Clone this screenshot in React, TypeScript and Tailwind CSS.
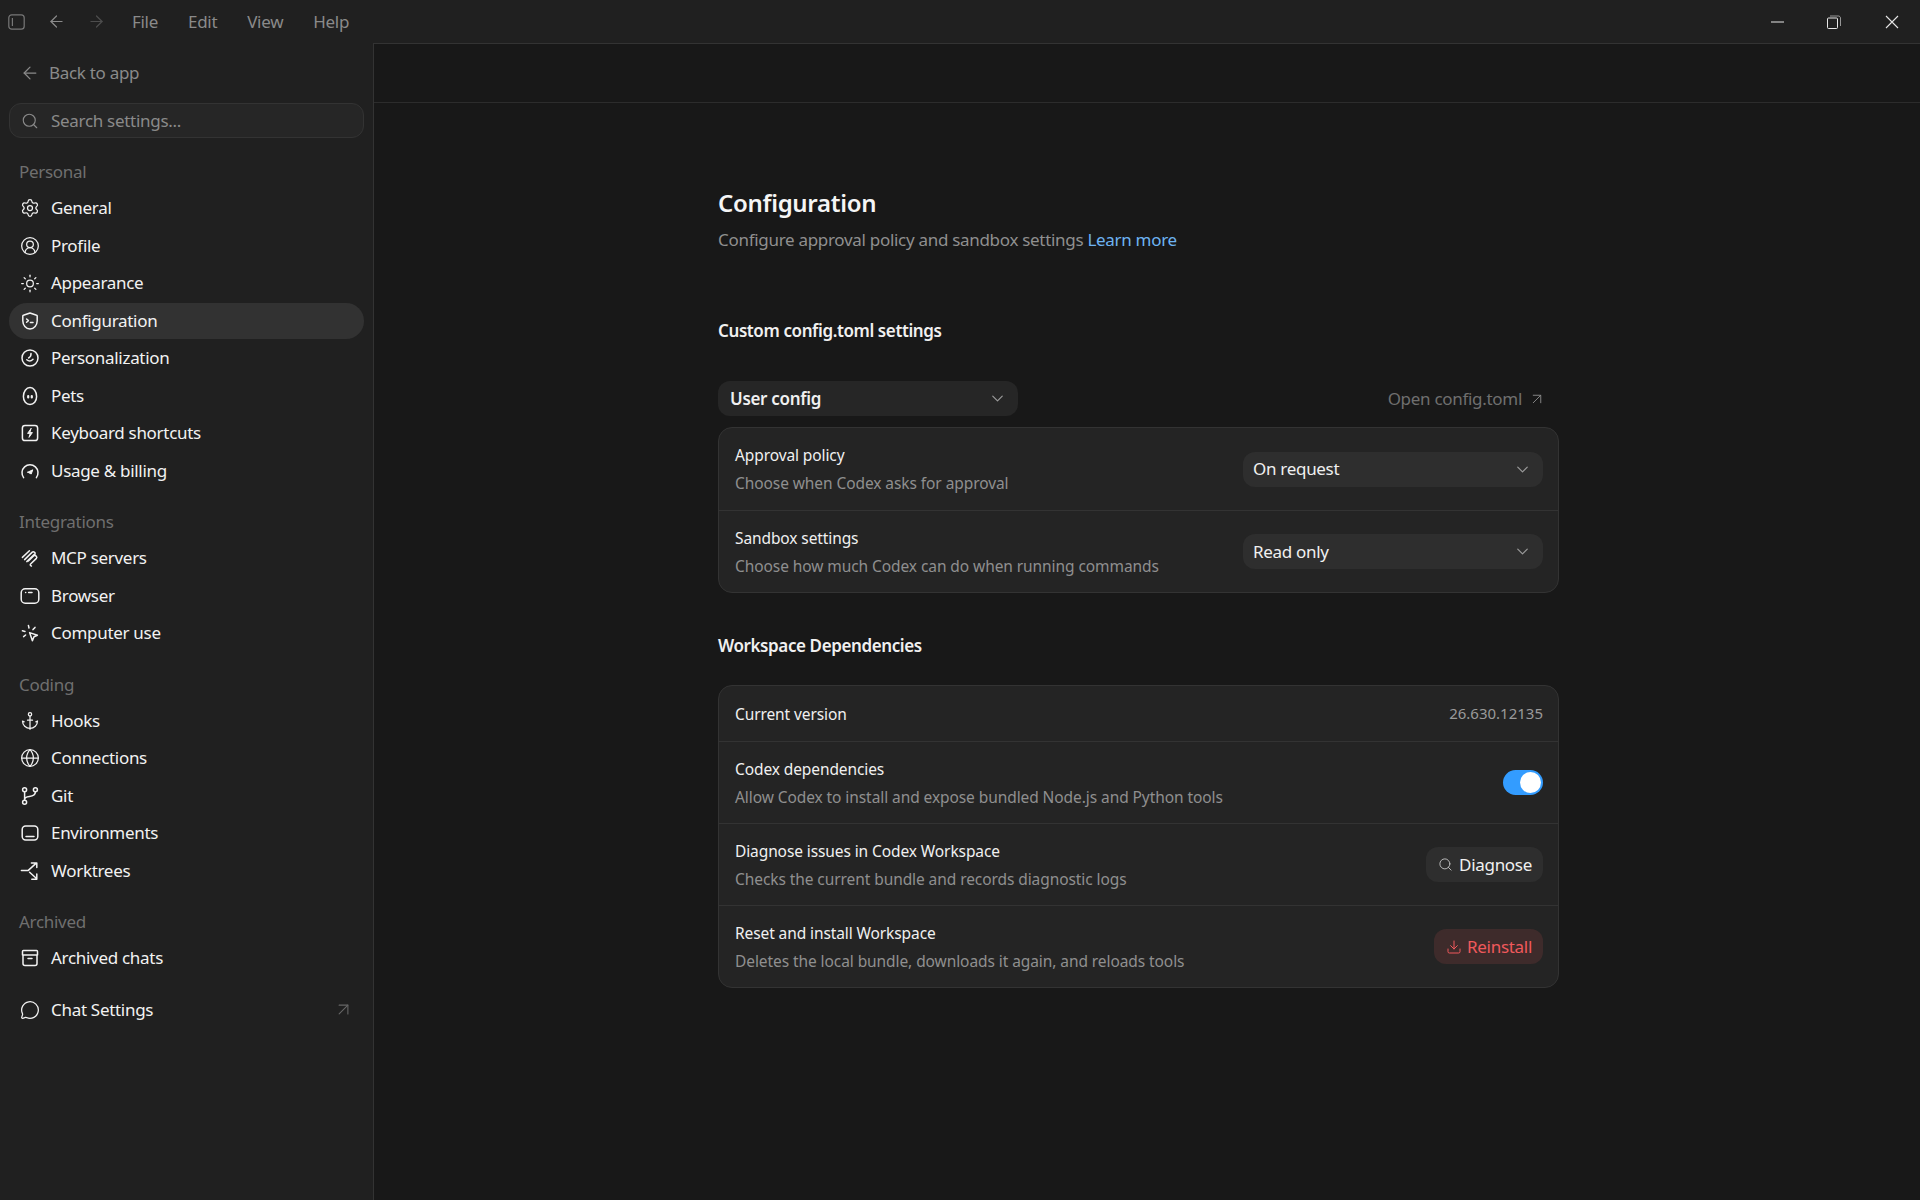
import { ReactNode } from 'react';
import { ArrowLeft, ArrowRight, ArrowUpRight, Search, ChevronDown, Download, Sun, Anchor, Globe, MessageCircle, CircleUserRound, Settings } from 'lucide-react';

const stroke = { fill: 'none', stroke: 'currentColor', strokeWidth: 1.5, strokeLinecap: 'round', strokeLinejoin: 'round' } as const;

function Ico({ children }: { children: ReactNode }) {
  return <svg width="20" height="20" viewBox="0 0 20 20" {...stroke} className="shrink-0">{children}</svg>;
}

const ShieldIcon = () => (
  <Ico>
    <path d="M10 2 16.6 4.2c.4.1.6.4.6.8v4.8c0 4.4-3.1 7.8-7.2 8.2-4.1-.4-7.2-3.8-7.2-8.2V5c0-.4.2-.7.6-.8L10 2Z" />
    <path d="m6.6 8 1.8 1.6-1.8 1.6M10.4 11.4h2.6" />
  </Ico>
);
const FaceIcon = () => (
  <Ico>
    <circle cx="10" cy="10" r="8" />
    <path d="M11 5.4c.2 2-.6 3.6-2.4 4.6M6.8 11.8c1.8 1.6 4.4 1.4 6.2-.6" />
  </Ico>
);
const EggIcon = () => (
  <Ico>
    <path d="M10 1.6c3.8 0 6.6 4 6.6 8.8 0 4.8-2.8 8-6.6 8s-6.6-3.2-6.6-8c0-4.8 2.8-8.8 6.6-8.8Z" />
    <path d="M8.2 10v1.4M11.8 10v1.4" strokeWidth="2.2" />
  </Ico>
);
const ShortcutIcon = () => (
  <Ico>
    <rect x="2.4" y="2.4" width="15.2" height="15.2" rx="2.6" />
    <path d="m11 5.6-3.4 4.8h2.6L9 14.4l3.4-4.8H9.8L11 5.6Z" fill="currentColor" strokeWidth="1" />
  </Ico>
);
const GaugeIcon = () => (
  <Ico>
    <path d="M3.6 16.6A8 8 0 1 1 16.4 16.6" />
    <path d="m7.8 11.2 5-2.4-1.6 4.2-3.4-1.8Z" fill="currentColor" strokeWidth="1" />
  </Ico>
);
const McpIcon = () => (
  <Ico>
    <path d="m2.4 9.4 7-6.6M4.6 11.6 12 4.4c1.2-1.2 3-.2 3.2.8.2.8-.2 1.4-.8 2L8.4 13M6.8 13.6l7.6-7.2M14 7.6c1.8-.6 3.6 1.2 2.4 2.8L10.6 16c-.8.8-.2 1.8.8 2" />
  </Ico>
);
const BrowserIcon = () => (
  <Ico>
    <rect x="1.2" y="2.8" width="17.6" height="14.4" rx="4" />
    <path d="M5.6 6.6h.1M8.6 6.6h3.4" />
  </Ico>
);
const CursorIcon = () => (
  <Ico>
    <path d="m9.6 9.6 7.8 2.6-3.4 1.6-1.6 4-2.8-8.2Z" />
    <path d="M8.4 2.4l.6 2.6M15 4.4l-2 2.2M2.4 7.8l2.6.6M3.6 13.6l2-1.6" />
  </Ico>
);
const BranchIcon = () => (
  <Ico>
    <circle cx="4.6" cy="3.8" r="2" />
    <circle cx="4.6" cy="16.2" r="2" />
    <circle cx="15.4" cy="3.8" r="2" />
    <path d="M4.6 5.8v8.4M15.4 5.8c0 3.6-3 4.4-6 4.6-2.6.2-4.8.6-4.8 3" />
  </Ico>
);
const EnvIcon = () => (
  <Ico>
    <rect x="2.2" y="3" width="15.6" height="14" rx="3.4" />
    <path d="M6 13.6h8" />
  </Ico>
);
const WorktreeIcon = () => (
  <Ico>
    <path d="M1.4 9.6h6.6L16 2.4M11.4 2h5.4v4.6M9.6 11.2l7.2 6.6M16.8 13v5.2h-5" />
  </Ico>
);
const ArchiveIcon = () => (
  <Ico>
    <path d="M3.4 2.6h13.2c.5 0 .9.4.9.9v3.4h-15V3.5c0-.5.4-.9.9-.9ZM3 6.9v8.6c0 1.1.9 2 2 2h10c1.1 0 2-.9 2-2V6.9M8 10.4h4" />
  </Ico>
);

type Item = { label: string; icon: ReactNode; active?: boolean };

const personal: Item[] = [
  { label: 'General', icon: <Settings size={20} strokeWidth={1.5} /> },
  { label: 'Profile', icon: <CircleUserRound size={20} strokeWidth={1.5} /> },
  { label: 'Appearance', icon: <Sun size={21} strokeWidth={1.5} /> },
  { label: 'Configuration', icon: <ShieldIcon />, active: true },
  { label: 'Personalization', icon: <FaceIcon /> },
  { label: 'Pets', icon: <EggIcon /> },
  { label: 'Keyboard shortcuts', icon: <ShortcutIcon /> },
  { label: 'Usage & billing', icon: <GaugeIcon /> },
];
const integrations: Item[] = [
  { label: 'MCP servers', icon: <McpIcon /> },
  { label: 'Browser', icon: <BrowserIcon /> },
  { label: 'Computer use', icon: <CursorIcon /> },
];
const coding: Item[] = [
  { label: 'Hooks', icon: <Anchor size={20} strokeWidth={1.5} /> },
  { label: 'Connections', icon: <Globe size={20} strokeWidth={1.5} /> },
  { label: 'Git', icon: <BranchIcon /> },
  { label: 'Environments', icon: <EnvIcon /> },
  { label: 'Worktrees', icon: <WorktreeIcon /> },
];

function NavRow({ item }: { item: Item }) {
  return (
    <div className={`flex items-center h-[36px] mb-[1.5px] rounded-[18px] pl-[11px] gap-[11px] text-[#f2f2f2] ${item.active ? 'bg-[#323232]' : ''}`}>
      <span className="w-[20px] h-[20px] flex items-center justify-center shrink-0">{item.icon}</span>
      <span className="tracking-[-0.3px]">{item.label}</span>
    </div>
  );
}

function NavSection({ title, items }: { title: string; items: Item[] }) {
  return (
    <div className="mb-[15.5px]">
      <div className="h-[36px] flex items-center pl-[10px] text-[#6f6f6f] tracking-[-0.3px]">{title}</div>
      {items.map((it) => <NavRow key={it.label} item={it} />)}
    </div>
  );
}

function Sidebar() {
  return (
    <aside className="w-[374px] shrink-0 border-r border-[#333333] px-[9px] text-[17px]">
      <div className="flex items-center h-[46px] pl-[11px] gap-[9px] text-[#8a8a8a] mt-[7px] tracking-[-0.3px]">
        <ArrowLeft size={20} strokeWidth={1.5} />
        <span>Back to app</span>
      </div>
      <div className="flex items-center h-[35px] mt-[7px] rounded-[12px] border border-[#333333] bg-[#262626] pl-[11px] gap-[12px] text-[#8a8a8a] tracking-[-0.3px]">
        <Search size={18} strokeWidth={1.5} />
        <span>Search settings...</span>
      </div>
      <div className="mt-[16px]">
        <NavSection title="Personal" items={personal} />
        <NavSection title="Integrations" items={integrations} />
        <NavSection title="Coding" items={coding} />
        <NavSection title="Archived" items={[{ label: 'Archived chats', icon: <ArchiveIcon /> }]} />
      </div>
      <div className="flex items-center justify-between h-[36px] mt-[10px] pl-[11px] pr-[10px] text-[#f2f2f2]">
        <div className="flex items-center gap-[11px] tracking-[-0.3px]">
          <MessageCircle size={20} strokeWidth={1.5} />
          <span>Chat Settings</span>
        </div>
        <ArrowUpRight size={21} strokeWidth={1.25} className="text-[#666666]" />
      </div>
    </aside>
  );
}

function TitleBar() {
  return (
    <header className="flex items-center justify-between h-[43px] shrink-0 text-[#8a8a8a]">
      <div className="flex items-center pl-[8px]">
        <svg width="17" height="16" viewBox="0 0 17 16" fill="none" stroke="currentColor" strokeWidth="1.2" className="text-[#777777]">
          <rect x=".8" y=".8" width="15.4" height="14.4" rx="3" />
          <path d="M4.4 4v8" />
        </svg>
        <ArrowLeft size={19} strokeWidth={1.5} className="ml-[22px]" />
        <ArrowRight size={19} strokeWidth={1.5} className="ml-[21px] text-[#4d4d4d]" />
        <nav className="flex items-center ml-[26px] gap-[30px] text-[17px] tracking-[-0.3px]">
          <span>File</span><span>Edit</span><span>View</span><span>Help</span>
        </nav>
      </div>
      <div className="flex items-center pr-[21px] text-[#e6e6e6]">
        <svg width="13" height="13" viewBox="0 0 13 13" stroke="currentColor" strokeWidth="1"><path d="M0 7h13" /></svg>
        <svg width="14" height="14" viewBox="0 0 14 14" fill="none" stroke="currentColor" strokeWidth="1" className="ml-[43px]">
          <rect x=".5" y="3" width="10" height="10.5" rx="1" />
          <path d="M3 1h8.5c1 0 2 1 2 2v8" className="opacity-60" />
        </svg>
        <svg width="14" height="14" viewBox="0 0 14 14" stroke="currentColor" strokeWidth="1.1" className="ml-[44px]"><path d="m1 1 12 12M13 1 1 13" /></svg>
      </div>
    </header>
  );
}

function Row({ title, sub, children, className = '' }: { title: string; sub?: string; children?: ReactNode; className?: string }) {
  return (
    <div className={`flex items-center justify-between pl-[16px] pr-[15px] border-t border-[#333333] first:border-t-0 ${className}`}>
      <div>
        <div className="text-[15.5px] leading-[24px] text-[#f0f0f0] tracking-[-0.1px]">{title}</div>
        {sub && <div className="text-[15.5px] leading-[24px] mt-[4px] text-[#8f8f8f] tracking-[-0.08px]">{sub}</div>}
      </div>
      {children}
    </div>
  );
}

function Select({ label }: { label: string }) {
  return (
    <div className="flex items-center justify-between w-[300px] h-[35px] rounded-[12px] bg-[#2e2e2e] pl-[10px] pr-[11px] text-[17px] text-[#f0f0f0] tracking-[-0.3px]">
      <span>{label}</span>
      <ChevronDown size={19} strokeWidth={1.5} className="text-[#9a9a9a]" />
    </div>
  );
}

export default function App() {
  return (
    <div className="flex flex-col h-[1200px] bg-[#202020] overflow-hidden font-['Noto_Sans','Open_Sans',sans-serif]">
      <TitleBar />
      <div className="flex flex-1 min-h-0">
        <Sidebar />
        <main className="flex-1 bg-[#181818] border-t border-[#333333] min-w-0">
          <div className="h-[59px] border-b border-[#2c2c2c]" />
          <div className="w-[841px] ml-[344px] pt-[83px]">
            <h1 className="text-[24px] leading-[34px] font-semibold text-[#f5f5f5] tracking-[-0.3px]">Configuration</h1>
            <p className="mt-[7px] text-[17px] leading-[26px] text-[#8f8f8f] tracking-[-0.3px]">
              Configure approval policy and sandbox settings <span className="text-[#6db3f2]">Learn more</span>
            </p>
            <h2 className="mt-[65px] text-[17px] leading-[26px] font-semibold text-[#f0f0f0] tracking-[-0.4px]">Custom config.toml settings</h2>
            <div className="flex items-center justify-between mt-[37px] pr-[13px]">
              <div className="flex items-center justify-between w-[300px] h-[35px] rounded-[12px] bg-[#262626] pl-[12px] pr-[11px] text-[17px] font-semibold text-[#f0f0f0] tracking-[-0.3px]">
                <span>User config</span>
                <ChevronDown size={19} strokeWidth={1.5} className="text-[#9a9a9a]" />
              </div>
              <div className="flex items-center gap-[6px] text-[17px] text-[#6f6f6f] tracking-[-0.3px]">
                <span>Open config.toml</span>
                <ArrowUpRight size={18} strokeWidth={1.25} className="text-[#8a8a8a]" />
              </div>
            </div>
            <section className="mt-[11px] rounded-[14px] border border-[#333333] bg-[#242424]">
              <Row title="Approval policy" sub="Choose when Codex asks for approval" className="h-[82px]"><Select label="On request" /></Row>
              <Row title="Sandbox settings" sub="Choose how much Codex can do when running commands" className="h-[82px]"><Select label="Read only" /></Row>
            </section>
            <h2 className="mt-[40px] text-[17px] leading-[26px] font-semibold text-[#f0f0f0] tracking-[-0.4px]">Workspace Dependencies</h2>
            <section className="mt-[26px] rounded-[14px] border border-[#333333] bg-[#242424]">
              <Row title="Current version" className="h-[55px]">
                <span className="text-[15px] text-[#9a9a9a]">26.630.12135</span>
              </Row>
              <Row title="Codex dependencies" sub="Allow Codex to install and expose bundled Node.js and Python tools" className="h-[82px]">
                <div className="flex items-center justify-end w-[40px] h-[25px] rounded-full bg-[#339cff] pr-[2px]">
                  <div className="w-[21px] h-[21px] rounded-full bg-white" />
                </div>
              </Row>
              <Row title="Diagnose issues in Codex Workspace" sub="Checks the current bundle and records diagnostic logs" className="h-[82px]">
                <div className="flex items-center gap-[6px] h-[35px] rounded-[12px] bg-[#2e2e2e] pl-[12px] pr-[11px] text-[17px] text-[#f0f0f0] tracking-[-0.3px]">
                  <Search size={15} strokeWidth={1.5} className="text-[#c0c0c0]" />
                  <span>Diagnose</span>
                </div>
              </Row>
              <Row title="Reset and install Workspace" sub="Deletes the local bundle, downloads it again, and reloads tools" className="h-[82px]">
                <div className="flex items-center gap-[5px] h-[35px] rounded-[12px] bg-[#3e2b2b] pl-[12px] pr-[11px] text-[17px] text-[#f0595c] tracking-[-0.3px]">
                  <Download size={16} strokeWidth={1.5} />
                  <span>Reinstall</span>
                </div>
              </Row>
            </section>
          </div>
        </main>
      </div>
    </div>
  );
}
